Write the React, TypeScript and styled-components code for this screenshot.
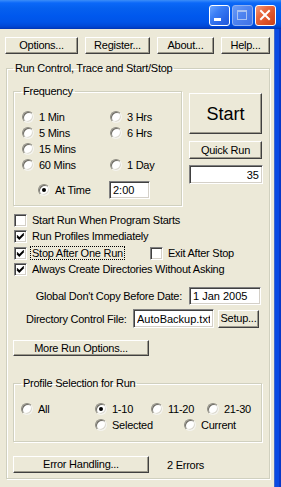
import * as React from 'react';
import styled, { createGlobalStyle } from 'styled-components';

const GlobalStyle = createGlobalStyle`
  html, body {
    margin: 0;
    padding: 0;
    background: #ECE9D8;
  }
  * {
    box-sizing: border-box;
  }
`

const Window = styled.div`
  width: 281px;
  height: 487px;
  overflow: hidden;
  display: flex;
  flex-direction: column;
  background: #ECE9D8;
  font-family: "Liberation Sans", Arial, sans-serif;
  font-size: 11px;
  letter-spacing: -0.25px;
  color: #000;
`

const TitleBar = styled.div`
  flex: none;
  height: 29px;
  display: flex;
  justify-content: flex-end;
  align-items: flex-start;
  gap: 2px;
  padding: 5px 5px 0 0;
  background: linear-gradient(to bottom,
    #3D8EF5 0px, #2A80FA 1px, #0B68F8 3px, #0560EF 8px,
    #0058EE 16px, #0054E8 22px, #0049D8 26px, #003DC4 28px, #0033B0 29px);
`

declare type CaptionKind = 'min' | 'max' | 'close'

const CaptionButton = styled.div<{ $kind: CaptionKind }>`
  width: 21px;
  height: 21px;
  border-radius: 3px;
  border: 1px solid ${(p) => (p.$kind === 'max' ? '#8FB0F2' : '#fff')};
  background: ${(p) => {
    if (p.$kind === 'close') {
      return 'linear-gradient(135deg, #F39A7C 0%, #E8683F 35%, #DB4F25 70%, #C8421C 100%)'
    }
    if (p.$kind === 'max') {
      return 'linear-gradient(135deg, #6B9CF6 0%, #4F84F0 45%, #3F72E8 100%)'
    }
    return 'linear-gradient(135deg, #6AA4FF 0%, #3B7EF5 35%, #2A66E8 70%, #2157D8 100%)'
  }};
  svg {
    display: block;
  }
`

const Body = styled.div`
  flex: 1;
  display: flex;
`

const Client = styled.div`
  flex: 1;
  padding: 8px 0 0 5px;
`

const RightFrame = styled.div`
  flex: none;
  width: 7px;
  background: linear-gradient(to right, #4068C8 0 1px, #0A4AE3 1px 5px, #0838C8 5px);
`

const ButtonRow = styled.div`
  display: flex;
  gap: 7px;
`

const Button = styled.button<{ $w: number; $h?: number; $size?: number }>`
  flex: none;
  width: ${(p) => p.$w}px;
  height: ${(p) => p.$h ?? 17}px;
  margin: 0;
  padding: 0;
  font-family: "Liberation Sans", Arial, sans-serif;
  font-size: ${(p) => p.$size ?? 11}px;
  letter-spacing: ${(p) => (p.$size ? '0' : '-0.25px')};
  line-height: 1;
  color: #000;
  background: #ECE9D8;
  border: 1px solid;
  border-color: #fff #404040 #404040 #fff;
  box-shadow: inset -1px -1px #9D9A8C;
`

const Group = styled.fieldset<{ $w: number; $h: number }>`
  flex: none;
  width: ${(p) => p.$w}px;
  height: ${(p) => p.$h}px;
  min-width: 0;
  margin: 0;
  padding: 0;
  border: 1px solid #D0D0BF;
  box-shadow: 1px 1px 0 #fff, inset 1px 1px 0 #fff;
`

const OuterGroup = styled(Group)`
  margin: 8px 0 0 1px;
`

const Legend = styled.legend<{ $m: number }>`
  margin-left: ${(p) => p.$m}px;
  padding: 0 2px;
  line-height: 13px;
  height: 13px;
`

const OuterInner = styled.div`
  padding: 10px 6px 0 6px;
`

const TopRow = styled.div`
  display: flex;
  align-items: flex-start;
`

const FreqInner = styled.div`
  padding: 11px 0 0 8px;
`

const RadioGrid = styled.div`
  display: grid;
  grid-template-columns: 88px auto;
  grid-auto-rows: 16px;
`

const AtTimeRow = styled.div`
  display: flex;
  align-items: center;
  margin-top: 8px;
  height: 18px;
`

const RightColumn = styled.div`
  display: flex;
  flex-direction: column;
  margin: 8px 0 0 7px;
`

const Choice = styled.label<{ $w?: number; $ml?: number }>`
  display: flex;
  align-items: center;
  gap: 5px;
  height: 16px;
  white-space: nowrap;
  ${(p) => (p.$w ? `width: ${p.$w}px; flex: none;` : '')}
  ${(p) => (p.$ml ? `margin-left: ${p.$ml}px;` : '')}
`

const RadioDot = styled.span<{ $on?: boolean }>`
  position: relative;
  flex: none;
  width: 12px;
  height: 12px;
  border-radius: 50%;
  background: #fff;
  border: 1px solid;
  border-color: #8E8C82 #F4F3EE #F4F3EE #8E8C82;
  box-shadow: inset 1px 1px #6E6C64, inset -1px -1px #DCDAD0;

  &::after {
    content: '';
    display: ${(p) => (p.$on ? 'block' : 'none')};
    position: absolute;
    left: 3px;
    top: 3px;
    width: 4px;
    height: 4px;
    border-radius: 50%;
    background: #000;
  }
`

const CheckBox = styled.span`
  flex: none;
  width: 13px;
  height: 13px;
  background: #fff;
  border: 1px solid;
  border-color: #808080 #fff #fff #808080;
  box-shadow: inset 1px 1px #404040, inset -1px -1px #D4D0C8;
  svg {
    display: block;
  }
`

const Field = styled.input<{ $w: number; $h: number; $align?: string }>`
  flex: none;
  width: ${(p) => p.$w}px;
  height: ${(p) => p.$h}px;
  margin: 0;
  padding: 0 3px 0 3px;
  font-family: "Liberation Sans", Arial, sans-serif;
  font-size: 11px;
  letter-spacing: 0;
  color: #000;
  text-align: ${(p) => p.$align ?? 'left'};
  background: #fff;
  border: 1px solid;
  border-color: #808080 #fff #fff #808080;
  box-shadow: inset 1px 1px #404040, inset -1px -1px #D4D0C8;
  outline: none;
`

const CheckList = styled.div`
  display: flex;
  flex-direction: column;
  margin-top: 6px;
  padding-left: 1px;
`

const CheckRow = styled.div<{ $mt?: number }>`
  display: flex;
  margin-top: ${(p) => p.$mt ?? 0}px;
`

const FocusText = styled.span`
  outline: 1px dotted #000;
  padding: 0 1px;
  margin-left: -1px;
  line-height: 13px;
`

const DateRow = styled.div`
  display: flex;
  justify-content: flex-end;
  align-items: center;
  gap: 7px;
  margin-top: 10px;
  padding-right: 2px;
`

const DirRow = styled.div`
  display: flex;
  align-items: center;
  margin-top: 4px;
`

const DirLabel = styled.span`
  flex: none;
  width: 107px;
  margin-left: 13px;
`

const ProfileInner = styled.div`
  padding: 11px 0 0 7px;
`

const ProfileRow = styled.div<{ $ml?: number }>`
  display: flex;
  margin-left: ${(p) => p.$ml ?? 0}px;
`

const ErrorRow = styled.div`
  display: flex;
  align-items: center;
  margin-top: 14px;
`

const ErrorText = styled.span`
  margin-left: 18px;
`

const Radio: React.FunctionComponent<{ label: string; on?: boolean; w?: number; ml?: number }> = ({ label, on, w, ml }) => (
  <Choice $w={w} $ml={ml}>
    <RadioDot $on={on} />
    <span>{label}</span>
  </Choice>
)

const Check: React.FunctionComponent<{ on?: boolean; w?: number; children: React.ReactNode }> = ({ on, w, children }) => (
  <Choice $w={w}>
    <CheckBox>
      {on && (
        <svg width="11" height="11" viewBox="0 0 11 11">
          <path d="M2 4.5 L4.3 6.8 L8.8 2.3 M2 5.8 L4.3 8.1 L8.8 3.6" stroke="#000" strokeWidth="1.2" fill="none" />
        </svg>
      )}
    </CheckBox>
    <span>{children}</span>
  </Choice>
)

const App: React.FunctionComponent = () => {
  return (
    <>
      <GlobalStyle />
      <Window>
        <TitleBar>
          <CaptionButton $kind="min">
            <svg width="19" height="19" viewBox="0 0 19 19">
              <rect x="4" y="12" width="7" height="3" fill="#fff" />
            </svg>
          </CaptionButton>
          <CaptionButton $kind="max">
            <svg width="19" height="19" viewBox="0 0 19 19">
              <rect x="4.5" y="4.5" width="9" height="9" fill="none" stroke="#A9C2F2" />
              <rect x="4" y="4" width="10" height="2" fill="#A9C2F2" />
            </svg>
          </CaptionButton>
          <CaptionButton $kind="close">
            <svg width="19" height="19" viewBox="0 0 19 19">
              <path d="M5 5 L13 13 M13 5 L5 13" stroke="#fff" strokeWidth="2" strokeLinecap="square" />
            </svg>
          </CaptionButton>
        </TitleBar>
        <Body>
          <Client>
            <ButtonRow>
              <Button $w={73}>Options...</Button>
              <Button $w={65}>Register...</Button>
              <Button $w={57}>About...</Button>
              <Button $w={49}>Help...</Button>
            </ButtonRow>

            <OuterGroup $w={264} $h={417}>
              <Legend $m={6}>Run Control, Trace and Start/Stop</Legend>
              <OuterInner>
                <TopRow>
                  <Group $w={169} $h={121}>
                    <Legend $m={7}>Frequency</Legend>
                    <FreqInner>
                      <RadioGrid>
                        <Radio label="1 Min" />
                        <Radio label="3 Hrs" />
                        <Radio label="5 Mins" />
                        <Radio label="6 Hrs" />
                        <Radio label="15 Mins" />
                        <span />
                        <Radio label="60 Mins" />
                        <Radio label="1 Day" />
                      </RadioGrid>
                      <AtTimeRow>
                        <Radio label="At Time" on w={71} ml={16} />
                        <Field $w={41} $h={18} value="2:00" readOnly />
                      </AtTimeRow>
                    </FreqInner>
                  </Group>
                  <RightColumn>
                    <Button $w={73} $h={41} $size={18}>Start</Button>
                    <Button $w={73} $h={18} style={{ marginTop: 7 }}>Quick Run</Button>
                    <Field $w={74} $h={19} $align="right" value="35" readOnly style={{ marginTop: 6 }} />
                  </RightColumn>
                </TopRow>

                <CheckList>
                  <CheckRow>
                    <Check>Start Run When Program Starts</Check>
                  </CheckRow>
                  <CheckRow>
                    <Check on>Run Profiles Immediately</Check>
                  </CheckRow>
                  <CheckRow $mt={1}>
                    <Check on w={136}><FocusText>Stop After One Run</FocusText></Check>
                    <Check>Exit After Stop</Check>
                  </CheckRow>
                  <CheckRow>
                    <Check on>Always Create Directories Without Asking</Check>
                  </CheckRow>
                </CheckList>

                <DateRow>
                  <span>Global Don't Copy Before Date:</span>
                  <Field $w={72} $h={18} value="1 Jan 2005" readOnly />
                </DateRow>

                <DirRow>
                  <DirLabel>Directory Control File:</DirLabel>
                  <Field $w={81} $h={19} value="AutoBackup.txt" readOnly />
                  <Button $w={41} $h={18} style={{ marginLeft: 4 }}>Setup...</Button>
                </DirRow>

                <Button $w={136} $h={16} style={{ marginTop: 12 }}>More Run Options...</Button>

                <Group $w={249} $h={65} style={{ marginTop: 21 }}>
                  <Legend $m={7}>Profile Selection for Run</Legend>
                  <ProfileInner>
                    <ProfileRow>
                      <Radio label="All" w={74} />
                      <Radio label="1-10" on w={56} />
                      <Radio label="11-20" w={56} />
                      <Radio label="21-30" />
                    </ProfileRow>
                    <ProfileRow $ml={74}>
                      <Radio label="Selected" w={89} />
                      <Radio label="Current" />
                    </ProfileRow>
                  </ProfileInner>
                </Group>

                <ErrorRow>
                  <Button $w={136} $h={17}>Error Handling...</Button>
                  <ErrorText>2 Errors</ErrorText>
                </ErrorRow>
              </OuterInner>
            </OuterGroup>
          </Client>
          <RightFrame />
        </Body>
      </Window>
    </>
  )
}

export default App
